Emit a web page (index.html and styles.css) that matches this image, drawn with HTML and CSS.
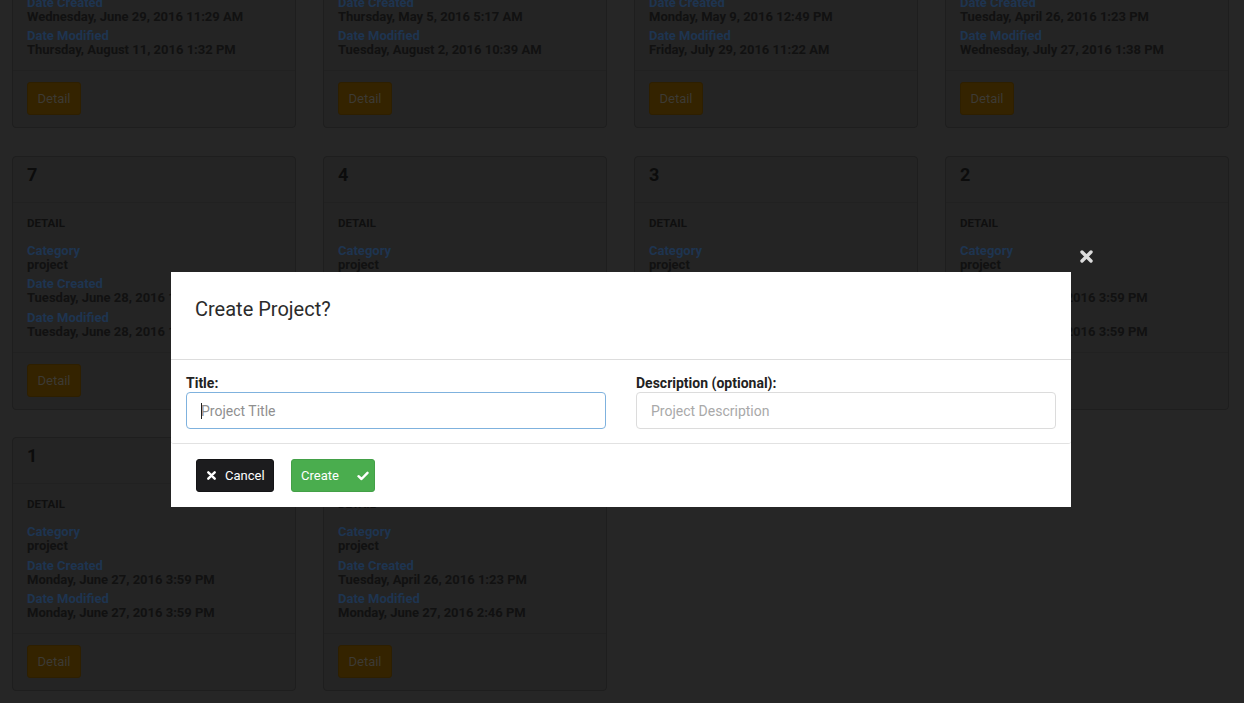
FILE: index.html
```html
<!DOCTYPE html>
<html>
<head>
<meta charset="utf-8">
<link rel="stylesheet" href="styles.css">
</head>
<body>
<div class="page">
  <div class="grid">
    <div class="card">
      <div class="card-head">8</div>
      <div class="card-body">
        <div class="sect">DETAIL</div>
        <div class="grp"><div class="lbl">Category</div><div class="val">project</div></div>
        <div class="grp"><div class="lbl">Date Created</div><div class="val">Wednesday, June 29, 2016 11:29 AM</div></div>
        <div class="grp"><div class="lbl">Date Modified</div><div class="val">Thursday, August 11, 2016 1:32 PM</div></div>
      </div>
      <div class="card-foot"><span class="btn-detail">Detail</span></div>
    </div>
    <div class="card">
      <div class="card-head">6</div>
      <div class="card-body">
        <div class="sect">DETAIL</div>
        <div class="grp"><div class="lbl">Category</div><div class="val">project</div></div>
        <div class="grp"><div class="lbl">Date Created</div><div class="val">Thursday, May 5, 2016 5:17 AM</div></div>
        <div class="grp"><div class="lbl">Date Modified</div><div class="val">Tuesday, August 2, 2016 10:39 AM</div></div>
      </div>
      <div class="card-foot"><span class="btn-detail">Detail</span></div>
    </div>
    <div class="card">
      <div class="card-head">5</div>
      <div class="card-body">
        <div class="sect">DETAIL</div>
        <div class="grp"><div class="lbl">Category</div><div class="val">project</div></div>
        <div class="grp"><div class="lbl">Date Created</div><div class="val">Monday, May 9, 2016 12:49 PM</div></div>
        <div class="grp"><div class="lbl">Date Modified</div><div class="val">Friday, July 29, 2016 11:22 AM</div></div>
      </div>
      <div class="card-foot"><span class="btn-detail">Detail</span></div>
    </div>
    <div class="card">
      <div class="card-head">9</div>
      <div class="card-body">
        <div class="sect">DETAIL</div>
        <div class="grp"><div class="lbl">Category</div><div class="val">project</div></div>
        <div class="grp"><div class="lbl">Date Created</div><div class="val">Tuesday, April 26, 2016 1:23 PM</div></div>
        <div class="grp"><div class="lbl">Date Modified</div><div class="val">Wednesday, July 27, 2016 1:38 PM</div></div>
      </div>
      <div class="card-foot"><span class="btn-detail">Detail</span></div>
    </div>

    <div class="card">
      <div class="card-head">7</div>
      <div class="card-body">
        <div class="sect">DETAIL</div>
        <div class="grp"><div class="lbl">Category</div><div class="val">project</div></div>
        <div class="grp"><div class="lbl">Date Created</div><div class="val">Tuesday, June 28, 2016 10:15 AM</div></div>
        <div class="grp"><div class="lbl">Date Modified</div><div class="val">Tuesday, June 28, 2016 10:15 AM</div></div>
      </div>
      <div class="card-foot"><span class="btn-detail">Detail</span></div>
    </div>
    <div class="card">
      <div class="card-head">4</div>
      <div class="card-body">
        <div class="sect">DETAIL</div>
        <div class="grp"><div class="lbl">Category</div><div class="val">project</div></div>
        <div class="grp"><div class="lbl">Date Created</div><div class="val">Tuesday, June 28, 2016 9:02 AM</div></div>
        <div class="grp"><div class="lbl">Date Modified</div><div class="val">Tuesday, June 28, 2016 9:02 AM</div></div>
      </div>
      <div class="card-foot"><span class="btn-detail">Detail</span></div>
    </div>
    <div class="card">
      <div class="card-head">3</div>
      <div class="card-body">
        <div class="sect">DETAIL</div>
        <div class="grp"><div class="lbl">Category</div><div class="val">project</div></div>
        <div class="grp"><div class="lbl">Date Created</div><div class="val">Monday, June 27, 2016 4:10 PM</div></div>
        <div class="grp"><div class="lbl">Date Modified</div><div class="val">Monday, June 27, 2016 4:10 PM</div></div>
      </div>
      <div class="card-foot"><span class="btn-detail">Detail</span></div>
    </div>
    <div class="card">
      <div class="card-head">2</div>
      <div class="card-body">
        <div class="sect">DETAIL</div>
        <div class="grp"><div class="lbl">Category</div><div class="val">project</div></div>
        <div class="grp"><div class="lbl">Date Created</div><div class="val">Monday, June 27, 2016 3:59 PM</div></div>
        <div class="grp"><div class="lbl">Date Modified</div><div class="val">Monday, June 27, 2016 3:59 PM</div></div>
      </div>
      <div class="card-foot"><span class="btn-detail">Detail</span></div>
    </div>

    <div class="card">
      <div class="card-head">1</div>
      <div class="card-body">
        <div class="sect">DETAIL</div>
        <div class="grp"><div class="lbl">Category</div><div class="val">project</div></div>
        <div class="grp"><div class="lbl">Date Created</div><div class="val">Monday, June 27, 2016 3:59 PM</div></div>
        <div class="grp"><div class="lbl">Date Modified</div><div class="val">Monday, June 27, 2016 3:59 PM</div></div>
      </div>
      <div class="card-foot"><span class="btn-detail">Detail</span></div>
    </div>
    <div class="card">
      <div class="card-head">0</div>
      <div class="card-body">
        <div class="sect">DETAIL</div>
        <div class="grp"><div class="lbl">Category</div><div class="val">project</div></div>
        <div class="grp"><div class="lbl">Date Created</div><div class="val">Tuesday, April 26, 2016 1:23 PM</div></div>
        <div class="grp"><div class="lbl">Date Modified</div><div class="val">Monday, June 27, 2016 2:46 PM</div></div>
      </div>
      <div class="card-foot"><span class="btn-detail">Detail</span></div>
    </div>
  </div>
</div>

<div class="close-x">
  <svg width="13" height="13" viewBox="0 0 13 13"><path d="M2 2 L11 11 M11 2 L2 11" stroke="#dcdcdc" stroke-width="3.4" stroke-linecap="round"/></svg>
</div>

<div class="modal">
  <div class="modal-head">Create Project?</div>
  <div class="modal-body">
    <div class="field">
      <label class="flabel">Title:</label>
      <div class="inwrap">
        <input class="finput focus" type="text" placeholder="Project Title">
        <span class="caret"></span>
      </div>
    </div>
    <div class="field">
      <label class="flabel">Description (optional):</label>
      <div class="inwrap">
        <input class="finput" type="text" placeholder="Project Description">
      </div>
    </div>
  </div>
  <div class="modal-foot">
    <span class="btn btn-cancel">
      <svg width="9" height="9" viewBox="0 0 9 9"><path d="M1.3 1.3 L7.7 7.7 M7.7 1.3 L1.3 7.7" stroke="#fff" stroke-width="2.4" stroke-linecap="round"/></svg>
      <span>Cancel</span>
    </span>
    <span class="btn btn-create">
      <span>Create</span>
      <svg width="12" height="10" viewBox="0 0 12 10"><path d="M1.5 5.2 L4.5 8 L10.5 1.8" fill="none" stroke="#fff" stroke-width="2.4" stroke-linecap="round" stroke-linejoin="round"/></svg>
    </span>
  </div>
</div>
</body>
</html>
```

FILE: styles.css
```css
html, body {
  margin: 0;
  padding: 0;
  height: 100%;
  overflow: hidden;
}
body {
  background: #262626;
  font-family: Roboto, "Liberation Sans", sans-serif;
}
.page {
  height: 703px;
  overflow: hidden;
}
.grid {
  display: grid;
  grid-template-columns: repeat(4, 284px);
  column-gap: 27px;
  row-gap: 27.5px;
  padding-left: 12px;
  margin-top: -126px;
}
.card {
  height: 254px;
  box-sizing: border-box;
  background: #242424;
  border: 1px solid #1e1e1e;
  border-radius: 4px;
  display: flex;
  flex-direction: column;
}
.card-head {
  height: 46px;
  box-sizing: border-box;
  border-bottom: 1px solid #212121;
  padding: 8px 14px 0;
  font-size: 18px;
  line-height: 20px;
  font-weight: 700;
  color: #0c0c0c;
}
.card-body {
  height: 149px;
  box-sizing: border-box;
  padding: 13px 14px 0;
}
.sect {
  font-size: 11.5px;
  font-weight: 700;
  line-height: 14px;
  color: #0f0f0f;
  margin-bottom: 14px;
}
.grp + .grp {
  margin-top: 5.5px;
}
.lbl {
  font-size: 13px;
  font-weight: 700;
  line-height: 14px;
  color: #1e3450;
}
.val {
  font-size: 13px;
  font-weight: 700;
  line-height: 14px;
  color: #111111;
  white-space: nowrap;
}
.card-foot {
  border-top: 1px solid #212121;
  padding: 11px 14px 0;
}
.btn-detail {
  display: inline-flex;
  align-items: center;
  justify-content: center;
  width: 54px;
  height: 33px;
  box-sizing: border-box;
  background: #342300;
  border: 1px solid #2e1f00;
  border-radius: 3px;
  color: #3c3a34;
  font-size: 13px;
}

/* modal */
.modal {
  position: fixed;
  left: 171px;
  top: 272px;
  width: 900px;
  height: 235px;
  background: #ffffff;
  display: flex;
  flex-direction: column;
}
.modal-head {
  height: 88px;
  flex: none;
  box-sizing: border-box;
  padding: 24px 24px 0;
  font-size: 20px;
  line-height: 26px;
  color: #2b2b2b;
  border-bottom: 1px solid #dddddd;
}
.modal-body {
  display: grid;
  grid-template-columns: 1fr 1fr;
  padding: 0;
  height: 84px;
  flex: none;
  box-sizing: border-box;
  border-bottom: 1px solid #e2e2e2;
  border-radius: 3px;
}
.field {
  padding: 15px 15px 0;
}
.flabel {
  display: block;
  font-size: 14px;
  font-weight: 700;
  line-height: 16px;
  color: #222222;
  margin-bottom: 1px;
}
.inwrap {
  position: relative;
}
.finput {
  display: block;
  width: 100%;
  height: 37px;
  box-sizing: border-box;
  border: 1px solid #dcdcdc;
  border-radius: 4px;
  padding: 0 14px;
  font-family: Roboto, "Liberation Sans", sans-serif;
  font-size: 14px;
  color: #333;
  outline: none;
  background: #fff;
}
.finput::placeholder {
  color: #a9a9a9;
}
.finput.focus {
  border-color: #7fb2de;
}
.finput.focus::placeholder {
  color: #8f8f8f;
}
.caret {
  position: absolute;
  left: 15px;
  top: 11px;
  width: 1px;
  height: 16px;
  background: #222;
}
.modal-foot {
  display: flex;
  gap: 17px;
  padding: 15px 25px;
}
.btn {
  display: inline-flex;
  align-items: center;
  height: 33px;
  box-sizing: border-box;
  border-radius: 3px;
  color: #ffffff;
  font-size: 13px;
}
.btn-cancel {
  width: 78px;
  background: #1c1c1e;
  border: 1px solid #141416;
  padding-left: 10px;
  gap: 9px;
}
.btn-create {
  width: 84px;
  background: #4aad4e;
  border: 1px solid #43a047;
  padding-left: 9px;
  gap: 18px;
}
.close-x {
  position: fixed;
  left: 1080px;
  top: 250px;
  width: 13px;
  height: 13px;
  display: flex;
}
```
